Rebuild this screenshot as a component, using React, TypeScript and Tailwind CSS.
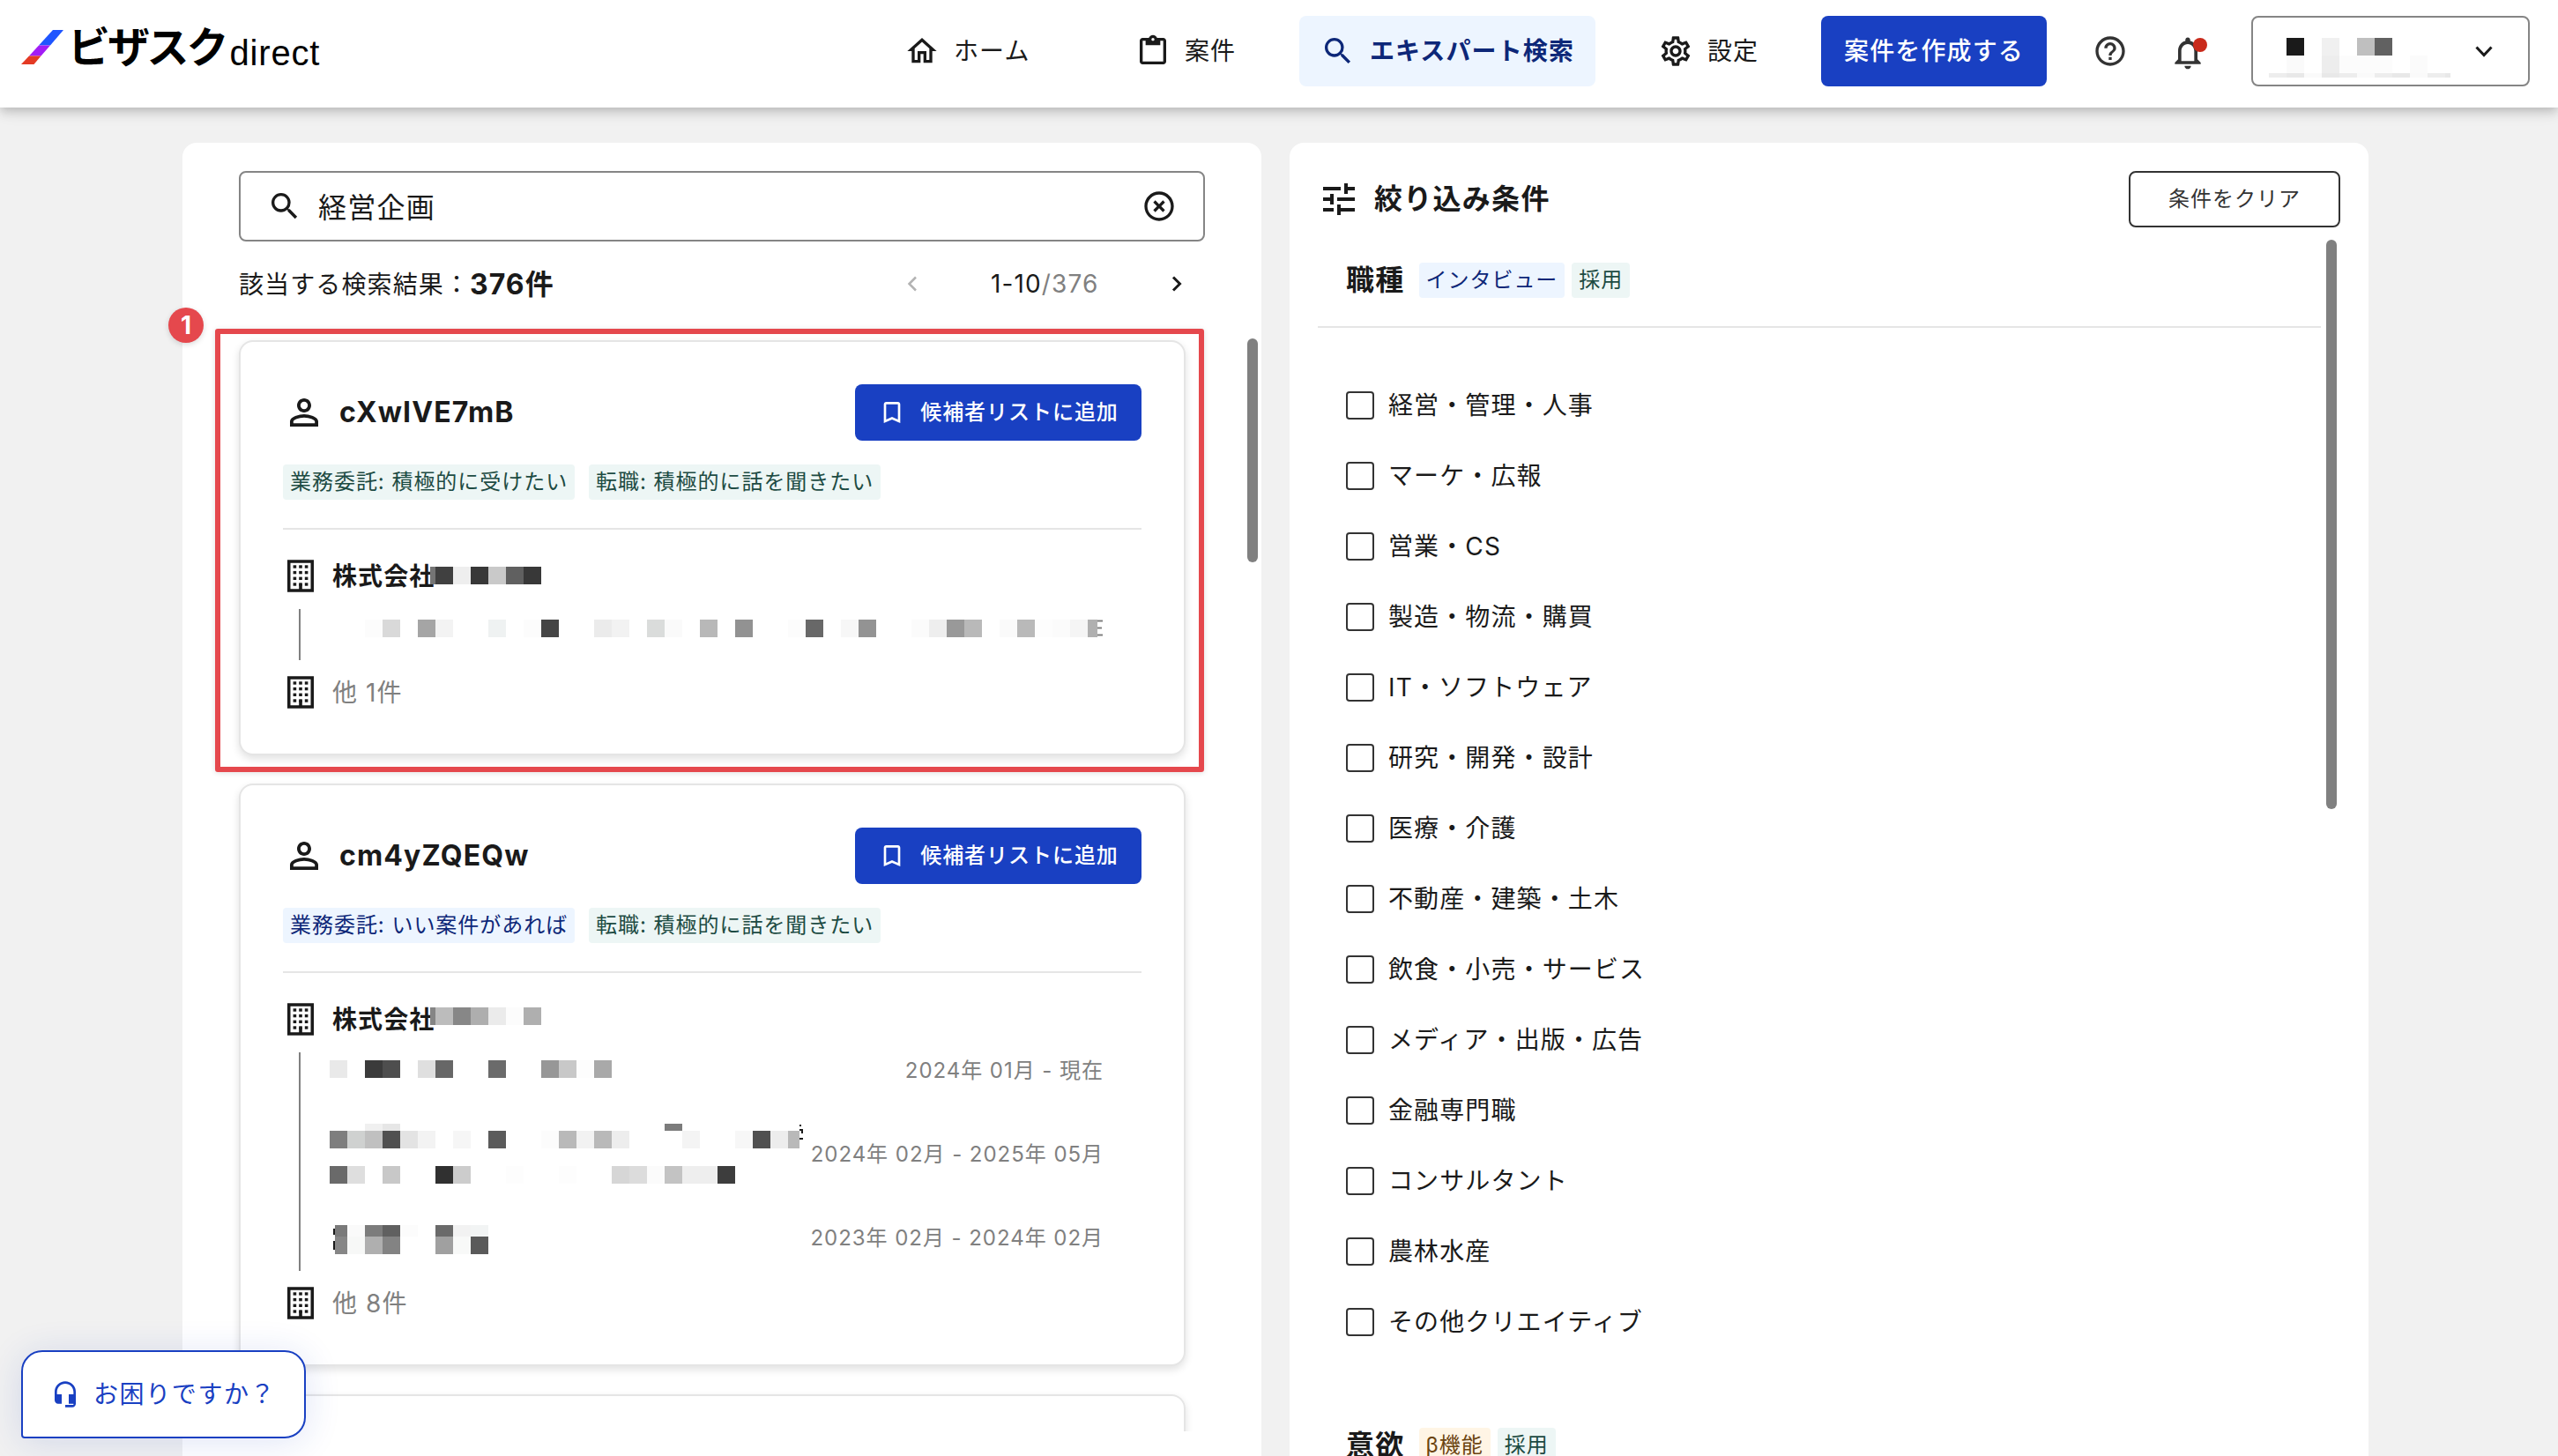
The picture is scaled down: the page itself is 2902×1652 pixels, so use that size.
import type { ReactNode } from "react";
import {
  MdBookmarkBorder,
  MdHeadsetMic,
  MdHelpOutline,
  MdHighlightOff,
  MdNotificationsNone,
  MdOutlineHome,
  MdOutlineSettings,
  MdPersonOutline,
  MdSearch,
  MdTune,
} from "react-icons/md";

type MosaicRow = { x?: number; y?: number; h?: number; cells: string };

// Pixelated block over private text. Cells are 20px wide, "-" is a gap.
const Mosaic = ({
  width,
  height = 20,
  rows,
  className = "",
}: {
  width: number;
  height?: number;
  rows: MosaicRow[];
  className?: string;
}) => {
  return (
    <svg
      width={width}
      height={height}
      className={`relative shrink-0 ${className}`}
      shapeRendering="crispEdges"
    >
      {rows.map((row, r) =>
        row.cells.split(" ").map((cell, i) =>
          cell === "-" ? null : (
            <rect
              key={`${r}-${i}`}
              x={(row.x ?? 0) + i * 20}
              y={row.y ?? 0}
              width={20}
              height={row.h ?? 20}
              fill={`#${cell}`}
            />
          )
        )
      )}
    </svg>
  );
};

const ClipboardIcon = () => {
  return (
    <svg width="40" height="40" viewBox="0 0 24 24" fill="currentColor">
      <path d="M19 3h-4.18C14.4 1.84 13.3 1 12 1s-2.4.84-2.82 2H5c-1.1 0-2 .9-2 2v14c0 1.1.9 2 2 2h14c1.1 0 2-.9 2-2V5c0-1.1-.9-2-2-2zm-7 0c.55 0 1 .45 1 1s-.45 1-1 1-1-.45-1-1 .45-1 1-1zm7 16H5V5h2v3h10V5h2v14z" />
    </svg>
  );
};

const BuildingIcon = () => {
  return (
    <svg width="30" height="37" viewBox="0 0 30 37" className="-mt-px ml-[5px] shrink-0">
      <rect x="1.75" y="2" width="26.5" height="33" fill="none" stroke="#1a1a1a" strokeWidth="3.5" />
      {[6.3, 12.9, 19.6, 26.3].map((y) =>
        [6.6, 13.2, 19.8].map((x) => (
          <rect key={`${x}-${y}`} x={x} y={y} width="3.6" height="3.4" fill="#1a1a1a" />
        ))
      )}
      <rect x="13.2" y="27.5" width="3.6" height="7" fill="#1a1a1a" />
    </svg>
  );
};

const Logo = () => {
  return (
    <div className="ml-6 flex h-[122px] w-[360px] items-center">
      <svg width="48" height="39" viewBox="0 0 48 39" className="-mt-[15px] shrink-0">
        <path d="M36 0H48L33 17.5H20z" fill="#1f55ff" />
        <path d="M20 17.5H33L22.5 29.5H9z" fill="#a21cf5" />
        <path d="M9 29.5H22.5L14.5 39H0z" fill="#e43a24" />
      </svg>
      <span className="-mt-[15px] ml-[5px] text-[48px] leading-none font-bold tracking-[-3px] text-black">
        ビザスク
      </span>
      <span className="-mt-[3px] ml-[4px] font-['Liberation_Sans',sans-serif] text-[40px] leading-none tracking-[0.8px] text-black">
        direct
      </span>
    </div>
  );
};

const NavItem = ({
  icon,
  label,
  className = "",
}: {
  icon: ReactNode;
  label: string;
  className?: string;
}) => {
  return (
    <a className={`flex h-20 shrink-0 items-center gap-4 rounded-lg px-6 ${className}`}>
      {icon}
      <span>{label}</span>
    </a>
  );
};

const Header = () => {
  return (
    <header className="relative z-10 flex h-[122px] items-start bg-white shadow-[0_4px_8px_-2px_rgba(0,0,0,0.1),0_8px_10px_rgba(0,0,0,0.08),0_2px_20px_rgba(0,0,0,0.1)]">
      <Logo />
      <div className="mt-[18px] ml-[618px] flex h-20 items-center">
        <NavItem icon={<MdOutlineHome size={40} />} label="ホーム" className="w-[262px]" />
        <NavItem icon={<ClipboardIcon />} label="案件" className="w-[210px]" />
        <NavItem
          icon={<MdSearch size={40} />}
          label="エキスパート検索"
          className="w-[336px] bg-[#edf5ff] font-bold whitespace-nowrap text-[#0d2778]"
        />
        <NavItem icon={<MdOutlineSettings size={40} />} label="設定" className="ml-[47px] w-[209px]" />
        <button className="h-20 w-[256px] shrink-0 rounded-lg bg-[#1940c2] font-medium text-white">
          案件を作成する
        </button>
        <MdHelpOutline size={40} className="ml-[52px] shrink-0 text-[#333]" />
        <div className="relative mt-1 ml-[46px] shrink-0 text-[#333]">
          <MdNotificationsNone size={44} />
          <span className="absolute top-[5px] right-0 size-4 rounded-full bg-[#c92a1b]"></span>
        </div>
        <div className="ml-[50px] flex h-20 w-[316px] shrink-0 items-center rounded-lg border-2 border-[#858585] pl-[18px]">
          <Mosaic
            width={206}
            height={45}
            className="mt-[15px]"
            rows={[
              { x: 20, cells: "1a1a1a - f0f0f0 - bfbfbf 616161" },
              { x: 20, y: 20, cells: "fafafa - ededed fcfcfc fcfcfc fcfcfc - fbfbfb" },
              { y: 40, h: 5, cells: "ededed e8e8e8 fafafa e8e8e8 ededed fafafa ededed e8e8e8 fafafa ededed e8e8e8" },
            ]}
          />
          <svg width="20" height="13" viewBox="0 0 20 13" className="ml-[28px]">
            <path d="M1.5 1.5L10 10.5L18.5 1.5" fill="none" stroke="#1a1a1a" strokeWidth="3" />
          </svg>
        </div>
      </div>
    </header>
  );
};

const tagColors = {
  green: "bg-[#edf6f5] text-[#1d4b43]",
  blue: "bg-[#edf5ff] text-[#0d2778]",
  yellow: "bg-[#fff5e5] text-[#6b4410]",
};

const Tag = ({ color, children }: { color: keyof typeof tagColors; children: ReactNode }) => {
  return (
    <span
      className={`flex h-10 items-center rounded px-2 text-2xl tracking-[0.04em] whitespace-nowrap ${tagColors[color]}`}
    >
      {children}
    </span>
  );
};

const ExpertCard = ({
  name,
  workTag,
  company,
  history,
  others,
}: {
  name: string;
  workTag: ReactNode;
  company: ReactNode;
  history: ReactNode;
  others: string;
}) => {
  return (
    <div className="mb-8 w-[1074px] rounded-2xl border-2 border-[#e5e5e5] bg-white p-12 shadow-[0_4px_10px_rgba(0,0,0,0.12)]">
      <div className="flex h-16 items-center">
        <MdPersonOutline size={48} />
        <h2 className="ml-4 text-[32px] font-bold">{name}</h2>
        <button className="ml-auto flex h-16 w-[325px] items-center justify-center gap-4 rounded-lg bg-[#1940c2] text-2xl font-medium tracking-[0.04em] text-white">
          <MdBookmarkBorder size={32} />
          候補者リストに追加
        </button>
      </div>
      <div className="mt-[27px] flex gap-4">
        {workTag}
        <Tag color="green">転職: 積極的に話を聞きたい</Tag>
      </div>
      <div className="mt-8 h-0.5 bg-[#e5e5e5]"></div>
      <div className="mt-8 flex h-[42px] items-center">
        <BuildingIcon />
        <span className="ml-[21px] w-[111px] font-bold whitespace-nowrap">株式会社</span>
        {company}
      </div>
      <div className="my-4 flex">
        <div className="ml-[18px] w-0.5 bg-[#808080]"></div>
        <div className="ml-[33px] w-[878px] text-2xl tracking-[0.04em] text-[#808080]">{history}</div>
      </div>
      <div className="flex h-[42px] items-center">
        <BuildingIcon />
        <span className="ml-[21px] text-[#808080]">{others}</span>
      </div>
    </div>
  );
};

const Period = ({ children }: { children: ReactNode }) => {
  return <span className="mt-px ml-auto whitespace-nowrap">{children}</span>;
};

const SearchPanel = () => {
  return (
    <section className="relative h-full w-[1224px] rounded-t-2xl bg-white px-16 pt-8">
      <div className="flex h-20 w-[1096px] items-center rounded-lg border-2 border-[#858585] pr-[30px] pl-[30px] text-[32px]">
        <MdSearch size={40} />
        <span className="mt-1 ml-[18px] tracking-[0.04em]">経営企画</span>
        <MdHighlightOff size={40} className="ml-auto" />
      </div>
      <div className="flex h-24 w-[1096px] items-center">
        <p className="mt-px flex items-center whitespace-nowrap">
          該当する検索結果：<b className="text-[32px] tracking-[1px]">376件</b>
        </p>
        <div className="mr-[26px] ml-auto flex items-center">
          <svg width="12" height="18" viewBox="0 0 12 18">
            <path d="M10 1.5L2.5 9L10 16.5" fill="none" stroke="#b3b3b3" strokeWidth="2.5" />
          </svg>
          <span className="ml-[83px] w-[121px] whitespace-nowrap">
            1-10<span className="text-[#808080]">/376</span>
          </span>
          <svg width="12" height="18" viewBox="0 0 12 18" className="ml-[84px]">
            <path d="M2 1.5L9.5 9L2 16.5" fill="none" stroke="#1a1a1a" strokeWidth="3" />
          </svg>
        </div>
      </div>
      <div className="-ml-6 h-[1254px] w-[1130px] overflow-hidden pt-4 pl-6">
        <ExpertCard
          name="cXwIVE7mB"
          workTag={<Tag color="green">業務委託: 積極的に受けたい</Tag>}
          company={
            <Mosaic
              width={126}
              className="-mt-0.5"
              rows={[{ x: -14, cells: "757575 404040 eeeeee 383838 c9c9c9 606060 383838" }]}
            />
          }
          others="他 1件"
          history={
            <div className="flex h-[58px] items-start pt-3 pl-10">
              <Mosaic
                width={831}
                rows={[
                  {
                    cells:
                      "fcfcfc d9d9d9 - a5a5a5 f3f3f3 - - eff2f2 - fcfcfc 454545 - - ebebeb f2f2f2 - dadcdb fafafa - b8b8b8 - 929292 - -",
                  },
                  {
                    x: 480,
                    cells:
                      "fcfcfc 686868 - f7f7f7 939393 - - fbfbfb eeeeee 999999 b9b9b9 - fafafa b9b9b9 fdfdfd fbfbfb f5f5f5 b0b0b0",
                  },
                ]}
              />
              <svg width="6" height="20" className="shrink-0">
                <path d="M0 1.5H6M0 9.5H5M0 17.5H6" stroke="#808080" strokeWidth="2" />
              </svg>
            </div>
          }
        />
        <ExpertCard
          name="cm4yZQEQw"
          workTag={<Tag color="blue">業務委託: いい案件があれば</Tag>}
          company={
            <Mosaic
              width={126}
              className="-mt-2"
              rows={[{ x: -14, cells: "858585 bcbcbc 878787 aeaeae ebebeb fcfcfc afafaf" }]}
            />
          }
          others="他 8件"
          history={
            <div className="flex h-[248px] flex-col gap-[35px]">
              <div className="flex h-10 items-center">
                <Mosaic
                  width={320}
                  className="-mt-0.5"
                  rows={[{ cells: "e9e9e9 - 3b3b3b 4e4e4e - dfdfdf 676767 - - 6b6b6b - - 979797 c8c8c8 fdfdfd a9a9a9" }]}
                />
                <Period>2024年 01月 - 現在</Period>
              </div>
              <div className="flex h-20 items-center">
                <Mosaic
                  width={533}
                  height={68}
                  rows={[
                    { x: 40, h: 8, cells: "f0f0f0 e6e6e6" },
                    { x: 380, h: 8, cells: "7c7c7c" },
                    {
                      y: 8,
                      cells:
                        "7e7e7e cfd1d0 c0c0c0 505050 e3e3e3 f3f3f3 - f6f6f6 - 5b5b5b - - fcfcfc b9b9b9 f2f2f2 b9b9b9 ededed - - - f4f4f4 - - f7f7f7 505050 ededed b9b9b9",
                    },
                    {
                      y: 48,
                      cells:
                        "6a6a6a dedede - c8c8c8 - - 303030 cccccc - - fdfdfd - - fdfdfd - - d6d6d6 dcdcdc fbfbfb c3c3c3 eeeeee eeeeee 3d3d3d",
                    },
                  ]}
                />
                <svg width="4" height="68" className="shrink-0">
                  <path d="M0 2H2M0 7H3V11M0 17H4" stroke="#1a1a1a" strokeWidth="2" fill="none" />
                </svg>
                <Period>2024年 02月 - 2025年 05月</Period>
              </div>
              <div className="flex h-10 items-center">
                <svg width="2" height="33" className="mt-1 ml-1 shrink-0">
                  <path d="M1 4V11M1 18V28" stroke="#1a1a1a" strokeWidth="2" />
                </svg>
                <Mosaic
                  width={174}
                  height={33}
                  className="mt-1"
                  rows={[
                    { x: -6, h: 13, cells: "7a7a7a fafafa 7c7c7c 606060 fcfcfc - 6a6a6a f2f2f2 f2f4f4" },
                    { x: -6, y: 13, cells: "868686 f7f8f7 afafaf 838383 - - a0a0a0 f8f9f8 5a5a5a" },
                  ]}
                />
                <Period>2023年 02月 - 2024年 02月</Period>
              </div>
            </div>
          }
        />
        <div className="h-[100px] w-[1074px] rounded-2xl border-2 border-[#e5e5e5] shadow-[0_4px_10px_rgba(0,0,0,0.12)]"></div>
      </div>
      <div className="absolute top-[222px] right-1 h-[254px] w-3 rounded-full bg-[#808080]"></div>

      {/* highlighted first result */}
      <div className="absolute top-[211px] left-[37px] h-[503px] w-[1122px] rounded-[3px] border-6 border-[#e5484d] shadow-[0_1px_6px_rgba(0,0,0,0.12)]"></div>
      <div className="absolute top-[187px] -left-4 flex size-10 items-center justify-center rounded-full bg-[#e5484d] text-[28px] font-bold tracking-normal text-white shadow-[0_2px_6px_rgba(0,0,0,0.15)]">
        1
      </div>
    </section>
  );
};

const jobs = [
  "経営・管理・人事",
  "マーケ・広報",
  "営業・CS",
  "製造・物流・購買",
  "IT・ソフトウェア",
  "研究・開発・設計",
  "医療・介護",
  "不動産・建築・土木",
  "飲食・小売・サービス",
  "メディア・出版・広告",
  "金融専門職",
  "コンサルタント",
  "農林水産",
  "その他クリエイティブ",
];

const FilterPanel = () => {
  return (
    <section className="relative h-full w-[1224px] overflow-hidden rounded-t-2xl bg-white px-8 pt-8">
      <div className="flex h-16 items-center">
        <MdTune size={48} />
        <h2 className="ml-4 text-[32px] font-bold tracking-[0.04em]">絞り込み条件</h2>
        <button className="ml-auto h-16 w-[240px] rounded-lg border-2 border-[#333] text-2xl tracking-[0.04em] text-[#333]">
          条件をクリア
        </button>
      </div>
      <div className="mt-10 flex h-10 items-center gap-2 pl-8">
        <h3 className="mr-2 text-[32px] font-bold tracking-[0.04em]">職種</h3>
        <Tag color="blue">インタビュー</Tag>
        <Tag color="green">採用</Tag>
      </div>
      <div className="mt-8 h-0.5 w-[1138px] bg-[#e5e5e5]"></div>
      <ul className="mt-[72px] flex flex-col gap-12 pl-8">
        {jobs.map((job) => (
          <li key={job} className="flex h-8 items-center gap-4">
            <span className="size-8 rounded border-2 border-[#333]"></span>
            {job}
          </li>
        ))}
      </ul>
      <div className="mt-[104px] flex h-10 items-center gap-2 pl-8">
        <h3 className="mr-2 text-[32px] font-bold tracking-[0.04em]">意欲</h3>
        <Tag color="yellow">β機能</Tag>
        <Tag color="green">採用</Tag>
      </div>
      <div className="absolute top-[110px] right-9 h-[646px] w-3 rounded-full bg-[#808080]"></div>
    </section>
  );
};

const App = () => {
  return (
    <div className="relative h-[1652px] w-[2902px] overflow-hidden bg-[#f1f1f1] font-['Inter','Noto_Sans_CJK_JP',sans-serif] text-[28px] leading-normal tracking-[0.04em] text-[#1a1a1a]">
      <Header />
      <main className="mt-10 ml-[207px] flex h-[1490px] gap-8">
        <SearchPanel />
        <FilterPanel />
      </main>
      <button className="absolute top-[1532px] left-6 flex h-[100px] w-[323px] items-center rounded-3xl rounded-bl border-2 border-[#1940c2] bg-white pl-8 tracking-[1.6px] text-[#1940c2] shadow-[0_4px_40px_rgba(25,64,194,0.14)]">
        <MdHeadsetMic size={32} />
        <span className="ml-4 whitespace-nowrap">お困りですか？</span>
      </button>
    </div>
  );
};

export default App;
